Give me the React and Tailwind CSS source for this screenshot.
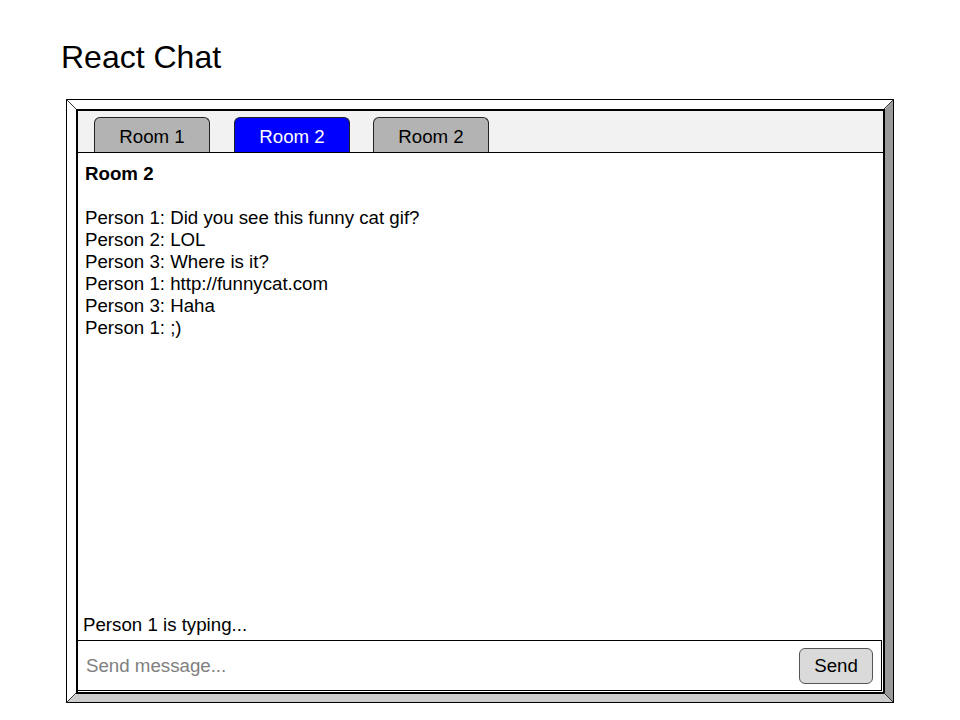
import React from 'react';

const rooms = [
    { id: 1, name: 'Room 1', active: false },
    { id: 2, name: 'Room 2', active: true },
    { id: 3, name: 'Room 2', active: false },
];

const messages = [
    'Person 1: Did you see this funny cat gif?',
    'Person 2: LOL',
    'Person 3: Where is it?',
    'Person 1: http://funnycat.com',
    'Person 3: Haha',
    'Person 1: ;)',
];

export default function App() {
    return (
        <div className="min-h-screen bg-white pl-[61px] pt-[41px] font-['Liberation_Sans',Arial,sans-serif] text-black">
            <h1 className="text-[32px] leading-none">React Chat</h1>

            {/* Window frame with bevel */}
            <div className="relative ml-[5px] mt-[26px] h-[604px] w-[828px] border border-black">
                <div className="h-full border-t-[9px] border-l-[9px] border-r-[8px] border-b-[8px] border-t-white border-l-white border-r-[#999999] border-b-[#cccccc]">
                    <div className="flex h-full flex-col border-2 border-black bg-white">
                        {/* Tabs */}
                        <div className="flex h-[42px] items-end border-b border-black bg-[#f2f2f2] pl-4">
                            {rooms.map((room, i) => (
                                <button
                                    key={room.id}
                                    className={
                                        (i === 0 ? '' : i === 1 ? 'ml-6 ' : 'ml-[23px] ') +
                                        (room.active
                                            ? 'flex h-[35px] w-[116px] items-center justify-center rounded-t-[6px] border border-b-0 border-[#222] bg-[#0000ff] pt-1 text-[18.7px] leading-[22px] text-white'
                                            : 'flex h-[35px] w-[116px] items-center justify-center rounded-t-[6px] border border-b-0 border-[#222] bg-[#b3b3b3] pt-1 text-[18.7px] leading-[22px] text-black')
                                    }
                                >
                                    {room.name}
                                </button>
                            ))}
                        </div>

                        {/* Messages */}
                        <div className="flex flex-1 flex-col pt-[10px] pb-1 text-[18.7px] leading-[22px]">
                            <div className="px-[7px]">
                                <div className="font-bold">Room 2</div>
                                <div className="mt-[22px]">
                                    {messages.map((m, i) => (
                                        <div key={i}>{m}</div>
                                    ))}
                                </div>
                            </div>
                            <div className="mt-auto px-[5px]">Person 1 is typing...</div>
                        </div>

                        {/* Composer */}
                        <div className="mb-px mr-px flex h-[51px] items-center border-t border-r border-b border-black pl-2 pr-2">
                            <input
                                type="text"
                                placeholder="Send message..."
                                className="min-w-0 flex-1 bg-transparent pt-[2px] text-[18.7px] text-black outline-none placeholder:text-[#808080]"
                            />
                            <button className="h-[36px] w-[74px] rounded-[6px] border border-[#555] bg-[#dadada] pt-[2px] text-[18.7px] leading-none">
                                Send
                            </button>
                        </div>
                    </div>
                </div>

                {/* bevel corner lines */}
                <svg
                    className="pointer-events-none absolute -inset-px"
                    width="828"
                    height="604"
                    viewBox="0 0 828 604"
                    aria-hidden="true"
                >
                    <g stroke="#333" strokeWidth="1">
                        <line x1="0.5" y1="0.5" x2="10" y2="10" />
                        <line x1="827.5" y1="0.5" x2="818" y2="10" />
                        <line x1="0.5" y1="603.5" x2="10" y2="594" />
                        <line x1="827.5" y1="603.5" x2="818" y2="594" />
                    </g>
                </svg>
            </div>
        </div>
    );
}
